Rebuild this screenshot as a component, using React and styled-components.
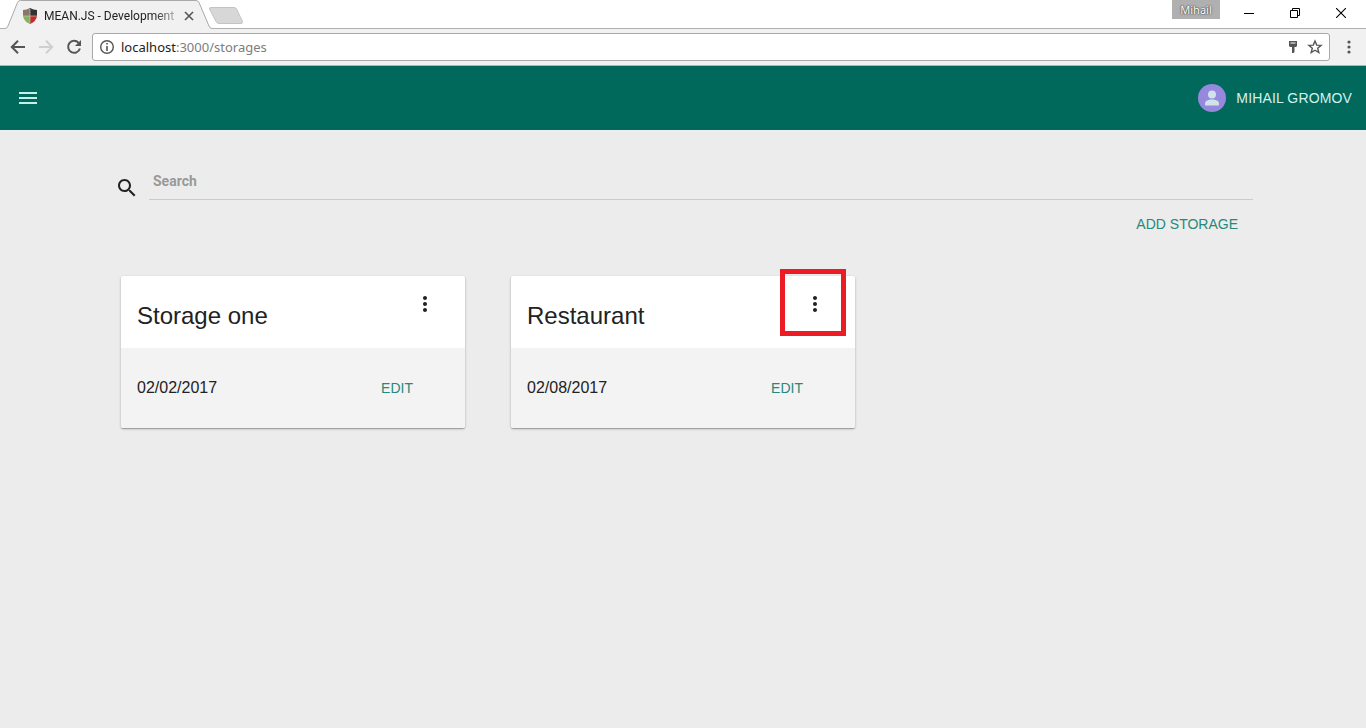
import React from "react";
import styled, { createGlobalStyle } from "styled-components";

const sans = `"Liberation Sans", Arial, sans-serif`;
const tabFont = `Roboto, sans-serif`;
const chromeFont = `"Noto Sans", sans-serif`;

const GlobalStyle = createGlobalStyle`
  *, *::before, *::after { box-sizing: border-box; }
  body { margin: 0; background: #ececec; font-family: ${sans}; color: #222; }
  button, input { font: inherit; }
`;

const PlainButton = styled.button`
  display: flex;
  align-items: center;
  justify-content: center;
  padding: 0;
  border: 0;
  background: none;
  color: inherit;
  cursor: pointer;
`;

const Icon = styled.svg.attrs({ "aria-hidden": true })`
  display: block;
  flex: none;
`;

/* Browser window */

const TabStrip = styled.div`
  display: flex;
  align-items: flex-start;
  height: 29px;
  padding-left: 5px;
  background: #fff;
  box-shadow: inset 0 -1px #b0b0b0;
`;

const Tab = styled.div`
  position: relative;
  display: flex;
  align-items: center;
  width: 207px;
  height: 29px;
  padding: 2px 15px 0 17px;
`;

const TabShape = styled(Icon)`
  position: absolute;
  inset: 0;
`;

const TabTitle = styled.span`
  position: relative;
  flex: 1;
  margin-left: 6px;
  white-space: nowrap;
  font: 12px/16px ${tabFont};
  color: #222;
  mask-image: linear-gradient(to right, #000 84%, rgba(0, 0, 0, 0.3));
`;

const Favicon = styled(Icon)`
  position: relative;
`;

const TabClose = styled(PlainButton)`
  position: relative;
  width: 16px;
  height: 16px;
  margin-left: 6px;
  color: #555;
`;

const NewTab = styled(PlainButton)`
  margin: 6px 0 0 -4px;
`;

const WindowControls = styled.div`
  display: flex;
  align-items: flex-start;
  margin-left: auto;
  padding-right: 2px;
`;

const ProfileBadge = styled(PlainButton)`
  width: 48px;
  height: 19px;
  margin-right: 6px;
  background: #b0b0b0;
  color: #fff;
  font: 11px/16px ${chromeFont};
  text-shadow: 0 0 2px #333, 0 0 1px #444;
`;

const WindowButton = styled(PlainButton)`
  width: 46px;
  height: 26px;
  color: #000;
`;

const Toolbar = styled.div`
  display: flex;
  align-items: center;
  height: 37px;
  padding: 0 4px;
  border-bottom: 1px solid #a5b8b4;
  background: #f1f1f1;
`;

const NavButton = styled(PlainButton)`
  width: 28px;
  height: 28px;
  color: ${(p) => (p.disabled ? "#cfcfcf" : "#555")};
`;

const Omnibox = styled.div`
  display: flex;
  flex: 1;
  align-items: center;
  gap: 6px;
  height: 28px;
  margin: 0 5px 0 4px;
  padding: 0 6px;
  border: 1px solid #a9a9a9;
  border-radius: 3px;
  background: #fff;
  color: #555;
`;

const Address = styled.a`
  flex: 1;
  font: 13px/18px ${chromeFont};
  color: #7d7d7d;
  text-decoration: none;
`;

const Host = styled.span`
  color: #222;
`;

const MenuButton = styled(PlainButton)`
  width: 27px;
  height: 28px;
  color: #555;
`;

/* Application */

const AppBar = styled.header`
  display: flex;
  align-items: center;
  justify-content: space-between;
  height: 64px;
  padding: 0 14px 0 16px;
  background: #00695c;
  color: #c4f2e8;
`;

const UserButton = styled(PlainButton)`
  gap: 10px;
  font-size: 14px;
  line-height: 20px;
  text-transform: uppercase;
  letter-spacing: 0.01em;
  color: #d4f2ec;
`;

const Page = styled.main`
  max-width: 1170px;
  margin: 0 auto;
  padding: 38px 15px 40px;
`;

const SearchRow = styled.label`
  display: flex;
  align-items: center;
  gap: 10px;
  padding-left: 2px;
`;

const SearchIcon = styled(Icon)`
  margin-top: 8px;
`;

const SearchInput = styled.input`
  flex: 1;
  min-width: 0;
  height: 32px;
  padding: 0 4px 6px;
  border: 0;
  border-bottom: 1px solid #cbcbcb;
  background: none;
  font-size: 14px;
  line-height: 18px;
  outline: 0;
  &::placeholder {
    color: #999;
    font-family: Roboto, ${sans};
    font-weight: 700;
    opacity: 1;
  }
`;

const Actions = styled.div`
  display: flex;
  justify-content: flex-end;
  padding: 6px 9px;
`;

const TextButton = styled(PlainButton)`
  min-width: 88px;
  height: 36px;
  padding: 0 6px;
  font-size: 14px;
  line-height: 20px;
  text-transform: uppercase;
  color: #26897b;
`;

const CardGrid = styled.section`
  display: grid;
  grid-template-columns: repeat(3, minmax(0, 1fr));
  gap: 46px;
  padding: 28px 8px 0;
`;

const Card = styled.article`
  border-radius: 2px;
  background: #fff;
  box-shadow: 0 1px 3px rgba(0, 0, 0, 0.2), 0 1px 1px rgba(0, 0, 0, 0.24);
`;

const CardHeader = styled.div`
  display: flex;
  align-items: flex-start;
  justify-content: space-between;
  height: 72px;
  padding: 8px 20px 0 16px;
`;

const CardTitle = styled.h2`
  margin: 16px 0 0;
  font-size: 24px;
  font-weight: 400;
  line-height: 32px;
`;

const CardMenu = styled(PlainButton)`
  position: relative;
  width: 40px;
  height: 40px;
`;

const Highlight = styled.span`
  position: absolute;
  inset: -15px -11px -12px -15px;
  border: 5px solid #ec1c24;
`;

const CardBody = styled.div`
  display: flex;
  align-items: center;
  justify-content: space-between;
  height: 80px;
  padding: 0 24px 0 16px;
  border-radius: 0 0 2px 2px;
  background: #f3f3f3;
  font-size: 16px;
  line-height: 24px;
`;

const storages = [
  { name: "Storage one", date: "02/02/2017" },
  { name: "Restaurant", date: "02/08/2017", highlighted: true },
];

const DOTS =
  "M12 8c1.1 0 2-.9 2-2s-.9-2-2-2-2 .9-2 2 .9 2 2 2zm0 2c-1.1 0-2 .9-2 2s.9 2 2 2 2-.9 2-2-.9-2-2-2zm0 6c-1.1 0-2 .9-2 2s.9 2 2 2 2-.9 2-2-.9-2-2-2z";

function StorageCard({ name, date, highlighted }) {
  return (
    <Card>
      <CardHeader>
        <CardTitle>{name}</CardTitle>
        <CardMenu aria-label={`${name} menu`}>
          <Icon width="24" height="24" viewBox="0 0 24 24" fill="currentColor">
            <path d={DOTS} />
          </Icon>
          {highlighted && <Highlight />}
        </CardMenu>
      </CardHeader>
      <CardBody>
        <time>{date}</time>
        <TextButton>Edit</TextButton>
      </CardBody>
    </Card>
  );
}

function BrowserChrome() {
  return (
    <>
      <TabStrip>
        <Tab>
          <TabShape width="207" height="29" viewBox="0 0 207 29">
            <path d="M0 29V28.500Q2 28.500 3 26L12.500 2.500Q13.500 .5 15.500 .5H191Q193 .5 194 2.500L204 26Q205 28.500 207 28.500V29Z" fill="#f1f1f1" />
            <path d="M0 28.500Q2 28.500 3 26L12.500 2.500Q13.500 .5 15.500 .5H191Q193 .5 194 2.500L204 26Q205 28.500 207 28.500" fill="none" stroke="#a9a9a9" />
          </TabShape>
          <Favicon width="16" height="16" viewBox="0 0 16 16">
            <path d="M8 0Q4.500 1.800 1 2V8H8Z" fill="#8a7768" />
            <path d="M8 0Q11.500 1.800 15 2V8H8Z" fill="#333132" />
            <path d="M1 8Q1.500 13 8 16V8Z" fill="#83b356" />
            <path d="M15 8Q14.500 13 8 16V8Z" fill="#c22b2e" />
            <path d="M8 1V15M1 8H15" stroke="#c9c2ba" strokeWidth=".7" />
          </Favicon>
          <TabTitle>MEAN.JS - Development</TabTitle>
          <TabClose aria-label="Close tab">
            <Icon width="10" height="10" viewBox="0 0 10 10" stroke="currentColor" strokeWidth="1.600">
              <path d="M1 1L9 9M9 1L1 9" />
            </Icon>
          </TabClose>
        </Tab>
        <NewTab aria-label="New tab">
          <Icon width="36" height="19" viewBox="0 0 36 19">
            <path d="M1.500 3Q1 1.500 3 1.500H26Q28 1.500 28.800 3.500L34.500 15.500Q35 17.500 33 17.500H11Q9 17.500 8 15.500Z" fill="#d7d7d7" stroke="#c3c3c3" />
          </Icon>
        </NewTab>
        <WindowControls>
          <ProfileBadge>Mihail</ProfileBadge>
          <WindowButton aria-label="Minimize">
            <Icon width="10" height="10" viewBox="0 0 10 10" stroke="currentColor">
              <path d="M0 5.500H10" />
            </Icon>
          </WindowButton>
          <WindowButton aria-label="Restore">
            <Icon width="10" height="10" viewBox="0 0 10 10" fill="none" stroke="currentColor">
              <path d="M.5 2.500H7.500V9.500H.5ZM2.500 2.500V.5H9.500V7.500H7.500" />
            </Icon>
          </WindowButton>
          <WindowButton aria-label="Close">
            <Icon width="10" height="10" viewBox="0 0 10 10" stroke="currentColor" strokeWidth="1.100">
              <path d="M0 0L10 10M10 0L0 10" />
            </Icon>
          </WindowButton>
        </WindowControls>
      </TabStrip>
      <Toolbar>
        <NavButton aria-label="Back">
          <Icon width="16" height="16" viewBox="0 0 16 16" fill="none" stroke="currentColor" strokeWidth="2">
            <path d="M15 8H2.500M8 1.800L1.800 8L8 14.200" />
          </Icon>
        </NavButton>
        <NavButton aria-label="Forward" disabled>
          <Icon width="16" height="16" viewBox="0 0 16 16" fill="none" stroke="currentColor" strokeWidth="2">
            <path d="M1 8H13.500M8 1.800L14.200 8L8 14.200" />
          </Icon>
        </NavButton>
        <NavButton aria-label="Reload">
          <Icon width="16" height="16" viewBox="0 0 16 16">
            <path d="M12.600 3.800A6 6 0 1 0 13.900 9.500" fill="none" stroke="currentColor" strokeWidth="2" />
            <path d="M15 1V7H9Z" fill="currentColor" />
          </Icon>
        </NavButton>
        <Omnibox>
          <Icon width="16" height="16" viewBox="0 0 16 16">
            <circle cx="8" cy="8" r="6.300" fill="none" stroke="currentColor" strokeWidth="1.400" />
            <path d="M7.200 7H8.800V12H7.200ZM7.200 4H8.800V5.600H7.200Z" fill="currentColor" />
          </Icon>
          <Address href="#storages">
            <Host>localhost</Host>:3000/storages
          </Address>
          <Icon width="16" height="16" viewBox="0 0 16 16">
            <path fillRule="evenodd" d="M4 2H12V7L11 8H9.500V13L8.500 14H7V8H5L4 7ZM5.500 3.500V4.500H10.500V3.500Z" fill="currentColor" />
          </Icon>
          <Icon width="16" height="16" viewBox="0 0 16 16">
            <path d="M8 2L9.700 6.100L14.100 6.400L10.700 9.200L11.800 13.500L8 11.200L4.200 13.500L5.300 9.200L1.900 6.400L6.300 6.100Z" fill="none" stroke="currentColor" strokeWidth="1.400" />
          </Icon>
        </Omnibox>
        <MenuButton aria-label="Browser menu">
          <Icon width="16" height="16" viewBox="0 0 16 16" fill="currentColor">
            <circle cx="8" cy="3" r="1.600" />
            <circle cx="8" cy="8" r="1.600" />
            <circle cx="8" cy="13" r="1.600" />
          </Icon>
        </MenuButton>
      </Toolbar>
    </>
  );
}

export default function App() {
  return (
    <>
      <GlobalStyle />
      <BrowserChrome />
      <AppBar>
        <PlainButton aria-label="Open navigation">
          <Icon width="24" height="24" viewBox="0 0 24 24" fill="currentColor">
            <path d="M3 18h18v-2H3v2zm0-5h18v-2H3v2zm0-7v2h18V6H3z" />
          </Icon>
        </PlainButton>
        <UserButton>
          <Icon width="28" height="28" viewBox="0 0 28 28">
            <circle cx="14" cy="14" r="14" fill="#9688dc" />
            <circle cx="14" cy="10.500" r="4" fill="#cfe3e8" />
            <path d="M7 21V19.500C7 16.500 10.500 15.500 14 15.500S21 16.500 21 19.500V21Q21 21.500 20.500 21.500H7.500Q7 21.500 7 21Z" fill="#cfe3e8" />
          </Icon>
          Mihail Gromov
        </UserButton>
      </AppBar>
      <Page>
        <SearchRow>
          <SearchIcon width="24" height="24" viewBox="0 0 24 24" fill="#222">
            <path d="M15.500 14h-.79l-.28-.27C15.410 12.590 16 11.110 16 9.500 16 5.910 13.090 3 9.500 3S3 5.910 3 9.500 5.910 16 9.500 16c1.610 0 3.090-.59 4.230-1.570l.27.28v.79l5 4.990L20.490 19l-4.990-5zm-6 0C7.010 14 5 11.990 5 9.500S7.010 5 9.500 5 14 7.010 14 9.500 11.990 14 9.500 14z" />
          </SearchIcon>
          <SearchInput type="text" placeholder="Search" aria-label="Search" />
        </SearchRow>
        <Actions>
          <TextButton>Add storage</TextButton>
        </Actions>
        <CardGrid>
          {storages.map((s) => (
            <StorageCard key={s.name} {...s} />
          ))}
        </CardGrid>
      </Page>
    </>
  );
}
